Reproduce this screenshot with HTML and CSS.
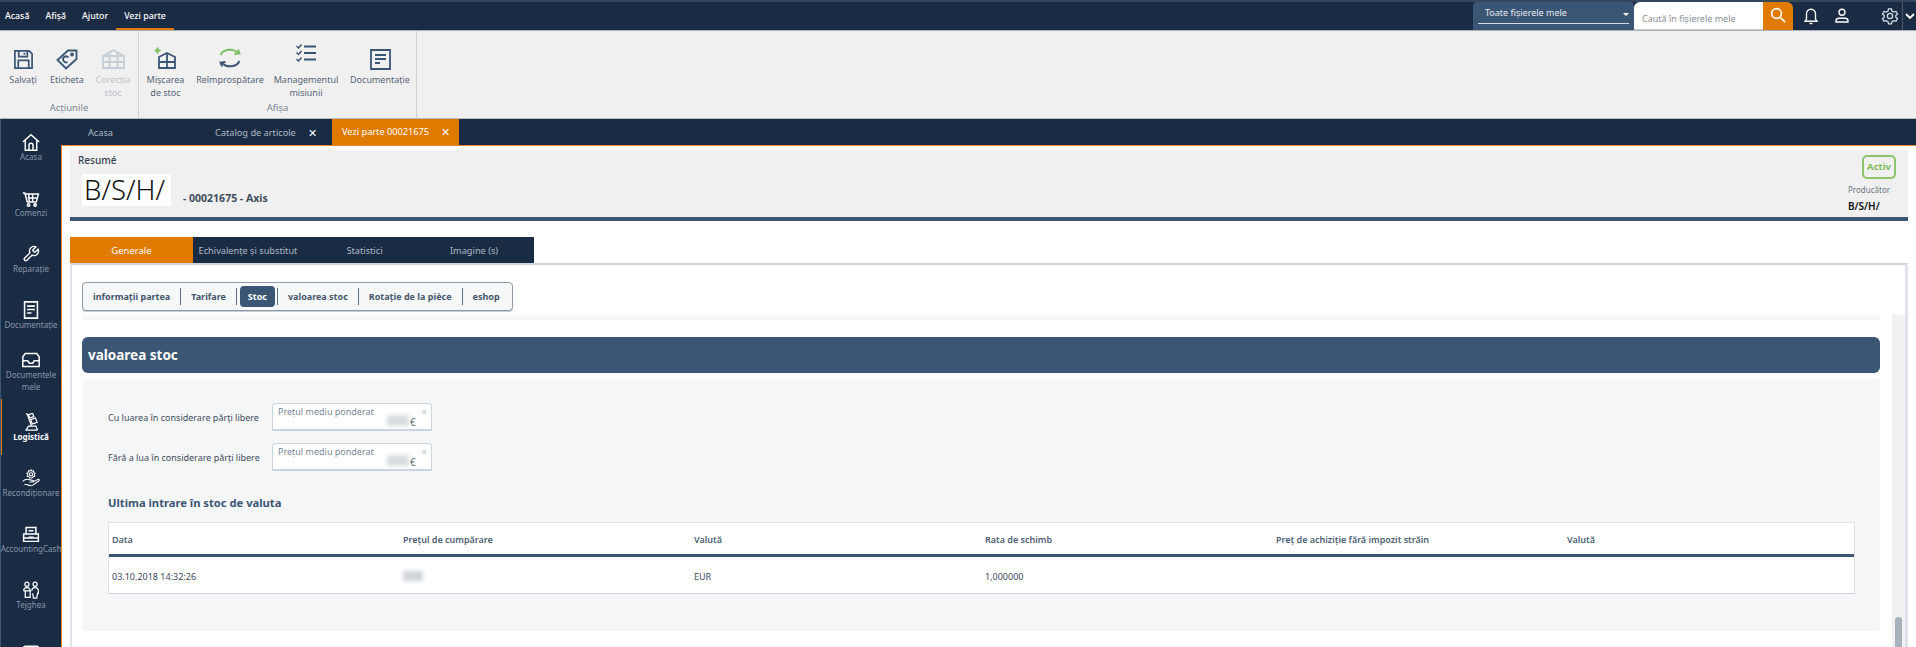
FILE: index.html
```html
<!DOCTYPE html>
<html lang="ro">
<head>
<meta charset="utf-8">
<title>Vezi parte 00021675</title>
<link rel="stylesheet" href="styles.css">
</head>
<body>
<header class="topbar">
  <nav class="menu">
    <span class="menu-item">Acasă</span>
    <span class="menu-item">Afișă</span>
    <span class="menu-item">Ajutor</span>
    <span class="menu-item is-active">Vezi parte</span>
  </nav>
  <div class="top-tools">
    <div class="scope"><span class="scope-text">Toate fișierele mele</span><span class="scope-caret"></span></div>
    <div class="search"><span>Caută în fișierele mele</span></div>
    <div class="search-btn">
      <svg width="18" height="18" viewBox="0 0 24 24" fill="none" stroke="#fff" stroke-width="2.2"><circle cx="10" cy="10" r="6.5"/><path d="M15 15l6.5 6.5"/></svg>
    </div>
    <div class="tool bell">
      <svg width="18" height="20" viewBox="0 0 24 24" fill="none" stroke="#fff" stroke-width="1.8"><path d="M12 3a6 6 0 0 1 6 6v7l2 3H4l2-3V9a6 6 0 0 1 6-6z"/><path d="M10 22h4"/></svg>
    </div>
    <div class="tool user">
      <svg width="18" height="18" viewBox="0 0 24 24" fill="none" stroke="#fff" stroke-width="1.8"><circle cx="12" cy="7" r="4"/><path d="M4 20v-1.500c0-2 2-3.500 4-3.500h8c2 0 4 1.500 4 3.500V20z"/></svg>
    </div>
    <div class="tool gear">
      <svg width="18" height="18" viewBox="0 0 24 24" fill="none" stroke="#d5dbe3" stroke-width="1.700"><circle cx="12" cy="12" r="3.500"/><path d="M10 2.500h4l.6 3 2.500 1.400 2.900-1 2 3.500-2.300 2v2.200l2.300 2-2 3.500-2.900-1-2.500 1.400-.6 3h-4l-.6-3-2.500-1.400-2.900 1-2-3.500 2.300-2v-2.200l-2.300-2 2-3.500 2.900 1 2.500-1.400z"/></svg>
    </div>
    <div class="chevron">
      <svg width="10" height="8" viewBox="0 0 10 8" fill="none" stroke="#fff" stroke-width="1.800"><path d="M1 2l4 4 4-4"/></svg>
    </div>
  </div>
</header>

<section class="ribbon">
  <div class="group group-actions">
    <div class="group-items items-actions">
      <div class="rb">
        <span class="rb-icon"><svg width="21" height="21" viewBox="0 0 22 22" fill="none" stroke="#3b5675" stroke-width="1.800"><path d="M2 2h15l3 3v15H2z"/><path d="M6 2v6h9V2M12 4v2M5.500 20v-8h11v8"/></svg></span>
        <span class="rb-label">Salvați</span>
      </div>
      <div class="rb">
        <span class="rb-icon"><svg width="22" height="22" viewBox="0 0 22 22" fill="none" stroke="#3b5675" stroke-width="1.800"><path d="M1.500 12L12 2.500h8.500V11L10 20.500z"/><circle cx="16" cy="6.500" r="1"/><path d="M12.500 9.500a3 3 0 1 0-1 4.500"/></svg></span>
        <span class="rb-label">Eticheta</span>
      </div>
      <div class="rb is-disabled">
        <span class="rb-icon"><svg width="25" height="22" viewBox="0 0 25 22" fill="none" stroke="#c5ced6" stroke-width="1.800"><path d="M2 8l10.500-6L23 8v12H2z"/><path d="M2 8h21M2 14h21M8.500 4v16M16.500 4v16"/></svg></span>
        <span class="rb-label">Corecția<br>stoc</span>
      </div>
    </div>
    <div class="group-name">Acțiunile</div>
  </div>
  <div class="group group-view">
    <div class="group-items items-view">
      <div class="rb">
        <span class="rb-icon"><svg width="24" height="24" viewBox="0 0 24 24" fill="none" stroke="#3b5675" stroke-width="1.800"><path d="M5 11l8-4 8 4v11H5z"/><path d="M5 16h16M13 7v15"/><path d="M3.500 1.500v6M.5 4.500h6" stroke="#7dbf62" stroke-width="2"/></svg></span>
        <span class="rb-label">Mișcarea<br>de stoc</span>
      </div>
      <div class="rb">
        <span class="rb-icon"><svg width="24" height="24" viewBox="0 0 24 24" fill="none" stroke-width="1.900"><path d="M2.500 9A10 8 0 0 1 20 7" stroke="#7dbf62"/><path d="M16.500 8l5-.5L20 3.500" stroke="#7dbf62"/><path d="M21.500 15A10 8 0 0 1 4 17" stroke="#3b5675"/><path d="M7.500 16l-5 .5L4 20.500" stroke="#3b5675"/></svg></span>
        <span class="rb-label">Reîmprospătare</span>
      </div>
      <div class="rb rb-up">
        <span class="rb-icon"><svg width="20" height="18" viewBox="0 0 20 18" fill="none" stroke="#3b5675" stroke-width="1.800"><path d="M8 2.500h12M8 9h12M8 15.500h12"/><path d="M.5 2l2 2 3-3.500M.5 8.500l2 2 3-3.500M.5 15l2 2 3-3.500" stroke-width="1.500"/></svg></span>
        <span class="rb-label">Managementul<br>misiunii</span>
      </div>
      <div class="rb">
        <span class="rb-icon"><svg width="21" height="21" viewBox="0 0 21 21" fill="none" stroke="#3b5675" stroke-width="1.800"><path d="M1 1h19v19H1z"/><path d="M5 6h11M5 10h11M5 14h5"/></svg></span>
        <span class="rb-label">Documentație</span>
      </div>
    </div>
    <div class="group-name">Afișa</div>
  </div>
</section>

<div class="workspace">
  <aside class="sidebar">
    <div class="nav-item">
      <svg width="20" height="18" viewBox="0 0 24 22" fill="none" stroke="#fff" stroke-width="1.800"><path d="M2 11L12 2l10 9M5 9v12h14V9M9.500 21v-6a2.500 2.500 0 0 1 5 0v6"/></svg>
      <span>Acasa</span>
    </div>
    <div class="nav-item">
      <svg width="18" height="18" viewBox="0 0 22 22" fill="none" stroke="#fff" stroke-width="1.800"><path d="M1 5h2.500l3 11h11L20 6H4M8 6l1 10M13 6v10M7 11h12"/><circle cx="8" cy="19.500" r="1.500"/><circle cx="16" cy="19.500" r="1.500"/></svg>
      <span>Comenzi</span>
    </div>
    <div class="nav-item">
      <svg width="18" height="18" viewBox="0 0 24 24" fill="none" stroke="#fff" stroke-width="1.800"><path d="M14.700 6.300a1 1 0 0 0 0 1.400l1.600 1.600a1 1 0 0 0 1.400 0l3.770-3.770a6 6 0 0 1-7.940 7.940l-6.910 6.910a2.120 2.120 0 0 1-3-3l6.910-6.910a6 6 0 0 1 7.940-7.940l-3.760 3.760z"/></svg>
      <span>Reparație</span>
    </div>
    <div class="nav-item">
      <svg width="18" height="18" viewBox="0 0 21 21" fill="none" stroke="#fff" stroke-width="1.800"><path d="M3 1h15v19H3z"/><path d="M6 6h9M6 10h9M6 14h5"/></svg>
      <span>Documentație</span>
    </div>
    <div class="nav-item">
      <svg width="18" height="18" viewBox="0 0 22 22" fill="none" stroke="#fff" stroke-width="1.800"><path d="M4 3h14l3 4v12H1V7zM1 12h6l2 3h4l2-3h6"/></svg>
      <span>Documentele<br>mele</span>
    </div>
    <div class="nav-item is-active">
      <svg width="18" height="18" viewBox="0 0 22 22" fill="none" stroke="#fff" stroke-width="1.500"><path d="M5 .5l1.500 1 5 14M4 21h15M5 21l3-5h9l2 5"/><path d="M8 2l5-1.500 1.500 4-5 1.500zM10.500 8l6-2 2 5.500-6 2z"/></svg>
      <span>Logistică</span>
    </div>
    <div class="nav-item">
      <svg width="18" height="18" viewBox="0 0 22 22" fill="none" stroke="#fff" stroke-width="1.300"><circle cx="11" cy="6.500" r="2"/><path d="M11 1l1 1.500 2-.3.500 2 1.500 1.300-1 1.500.5 2-2 .5-1 1.500H9.500L8.500 9.500l-2-.5.500-2L6 5.500l1.500-1.300.5-2 2 .3z"/><path d="M1 15c2-2 5-3 8-2l4 1c2 0 2 2 0 2H9m4 0l6-3c2-1 3 1 1 2l-7 5c-2 1-5 0-7-1H3"/></svg>
      <span>Recondiționare</span>
    </div>
    <div class="nav-item">
      <svg width="18" height="18" viewBox="0 0 22 22" fill="none" stroke="#fff" stroke-width="1.800"><path d="M5 11V3h12v8M2 11h18v9H2zM2 16h18M8 7h6M8 15h6"/></svg>
      <span>AccountingCash</span>
    </div>
    <div class="nav-item">
      <svg width="18" height="18" viewBox="0 0 22 22" fill="none" stroke="#fff" stroke-width="1.500"><circle cx="6" cy="4" r="2.500"/><circle cx="16" cy="4" r="2.500"/><path d="M2 12c0-3 2-4 4-4s4 1 4 4M12 12c0-3 2-4 4-4s4 1 4 4v3h-1l-1 6h-4l-1-6M2 12h9M4 12v8h6v-8"/></svg>
      <span>Tejghea</span>
    </div>
    <div class="nav-item">
      <svg width="18" height="18" viewBox="0 0 22 22" fill="none" stroke="#fff" stroke-width="1.800"><rect x="2" y="4" width="18" height="15" rx="2"/><path d="M2 9h18"/></svg>
      <span></span>
    </div>
  </aside>

  <main class="main">
    <div class="doc-tabs">
      <div class="doc-tab tab-home">Acasa</div>
      <div class="doc-tab tab-catalog">Catalog de articole<span class="doc-x">✕</span></div>
      <div class="doc-tab tab-part">Vezi parte 00021675<span class="doc-x">✕</span></div>
    </div>
    <div class="content">
      <section class="summary">
        <div class="summary-left">
          <div class="summary-title">Resumé</div>
          <div class="summary-id">
            <span class="logo">B/S/H/</span>
            <span class="part-code">- 00021675 - Axis</span>
          </div>
        </div>
        <div class="summary-right">
          <span class="badge">Activ</span>
          <span class="maker-label">Producător</span>
          <span class="maker-name">B/S/H/</span>
        </div>
      </section>

      <div class="tabs">
        <div class="tab is-active">Generale</div>
        <div class="tab">Echivalențe și substitut</div>
        <div class="tab">Statistici</div>
        <div class="tab">Imagine (s)</div>
      </div>

      <section class="panel">
        <div class="subtabs">
          <span class="subtab">informații partea</span><i></i>
          <span class="subtab">Tarifare</span><i></i>
          <span class="subtab is-active">Stoc</span><i></i>
          <span class="subtab">valoarea stoc</span><i></i>
          <span class="subtab">Rotație de la pièce</span><i></i>
          <span class="subtab">eshop</span>
        </div>
        <div class="scroller">
          <div class="scroll-body">
            <div class="strip"></div>
            <h2 class="section-head">valoarea stoc</h2>
            <div class="section-body">
              <div class="form-row">
                <label>Cu luarea în considerare părți libere</label>
                <div class="field"><span class="field-label">Prețul mediu ponderat</span><span class="smudge"></span><span class="field-unit">€</span><span class="field-x">×</span></div>
              </div>
              <div class="form-row">
                <label>Fără a lua în considerare părți libere</label>
                <div class="field"><span class="field-label">Prețul mediu ponderat</span><span class="smudge"></span><span class="field-unit">€</span><span class="field-x">×</span></div>
              </div>
              <h3 class="sub-title">Ultima intrare în stoc de valuta</h3>
              <div class="table">
                <div class="t-row t-head">
                  <span>Data</span><span>Prețul de cumpărare</span><span>Valută</span><span>Rata de schimb</span><span>Preț de achiziție fără impozit străin</span><span>Valută</span>
                </div>
                <div class="t-row t-data">
                  <span>03.10.2018 14:32:26</span><span><b class="smudge-cell"></b></span><span>EUR</span><span>1,000000</span><span></span><span></span>
                </div>
              </div>
            </div>
          </div>
          <div class="scrollbar"><div class="thumb"></div></div>
        </div>
      </section>
    </div>
  </main>
</div>
</body>
</html>
```
FILE: styles.css
```css
* { box-sizing: border-box; }
html, body { margin: 0; height: 647px; overflow: hidden; }
body { font-family: "Noto Sans", "Open Sans", sans-serif; font-size: 9px; color: #3c4b5e; background: #fff; }

/* top bar */
.topbar { height: 30px; display: flex; justify-content: space-between; background: #1a2c44; border-top: 2px solid #34475c; }
.menu { display: flex; }
.menu-item { height: 28px; padding: 0 8px; line-height: 29px; color: #fff; font-size: 8.8px; font-weight: 500; }
.menu-item:first-child { padding-left: 5px; }
.menu-item.is-active { border-bottom: 2px solid #e07a00; }
.top-tools { display: flex; }
.scope { width: 161px; position: relative; background: #3b5675; border-radius: 4px 4px 0 0; padding: 0 5px; }
.scope-text { display: block; height: 22px; line-height: 22px; padding-left: 7px; border-bottom: 1px solid #d5dde6; color: #e3e8ee; font-size: 9px; }
.scope-caret { position: absolute; right: 5px; top: 11px; border: 3px solid transparent; border-top: 3px solid #fff; }
.search { width: 129px; background: #fff; border-radius: 6px 0 0 0; padding-left: 8px; line-height: 34px; color: #8a8f98; font-size: 9px; border-bottom: 1px solid #c9ced4; }
.search-btn { width: 30px; background: #e07a00; border-radius: 0 6px 0 0; display: flex; align-items: center; justify-content: center; padding-bottom: 3px; }
.tool { display: flex; align-items: center; justify-content: center; height: 28px; }
.bell { width: 36px; }
.user { width: 26px; }
.gear { width: 47px; justify-content: flex-end; padding-right: 3px; }
.chevron { width: 14px; height: 28px; border-left: 1px solid #4b5a6b; display: flex; align-items: center; justify-content: center; }

/* ribbon */
.ribbon { height: 89px; display: flex; background: #f0f0f0; border-top: 1px solid #a9aeb4; border-bottom: 1px solid #b8b8b8; }
.group { display: flex; flex-direction: column; border-right: 1px solid #d2d2d2; }
.group-actions { width: 139px; }
.group-view { width: 278px; }
.group-items { display: grid; height: 70px; }
.items-actions { grid-template-columns: 46px 42px 50px; }
.items-view { grid-template-columns: 53px 76px 76px 72px; }
.rb { display: flex; flex-direction: column; align-items: center; padding-top: 12px; color: #566476; text-align: center; line-height: 13px; font-size: 9px; }
.rb-icon { height: 27px; display: flex; align-items: flex-end; justify-content: center; margin-bottom: 3px; }
.rb-up .rb-icon { align-items: flex-start; padding-top: 1px; }
.rb-label { white-space: nowrap; }
.is-disabled { color: #bcc3cb; }
.group-name { text-align: center; color: #7c8794; font-size: 9.5px; line-height: 14px; }

/* workspace */
.workspace { height: 528px; display: flex; overflow: hidden; }
.sidebar { width: 61px; flex: none; background: #1a2c44; border-left: 1px solid #3b5675; }
.nav-item { height: 56px; padding-top: 2px; display: flex; flex-direction: column; align-items: center; justify-content: center; color: #8796a8; font-size: 8px; line-height: 12px; text-align: center; white-space: nowrap; }
.nav-item svg { flex: none; }
.nav-item.is-active { color: #fff; font-weight: 700; box-shadow: inset 1px 0 0 #e07a00; }

.main { flex: 1; min-width: 0; display: flex; flex-direction: column; }
.doc-tabs { height: 26px; flex: none; display: flex; background: #1a2c44; color: #aeb9c6; font-size: 9.2px; line-height: 27px; }
.doc-tab { display: flex; white-space: nowrap; }
.tab-home { width: 139px; padding-left: 27px; }
.tab-catalog { width: 132px; padding-left: 15px; }
.tab-part { width: 127px; padding-left: 10px; background: #e07a00; color: #fff; line-height: 25px; }
.doc-x { margin-left: 12px; font-size: 11px; color: #fff; }

.content { flex: 1; min-height: 0; border-top: 1px solid #e9872a; border-left: 1px solid #e9872a; padding: 4px 8px 0; display: flex; flex-direction: column; }

.summary { height: 71px; flex: none; display: flex; justify-content: space-between; background: #f0f0f0; border-bottom: 4px solid #3b5675; padding: 3px 12px 0 8px; }
.summary-title { font-size: 10px; font-weight: 500; color: #333f4e; line-height: 14px; }
.summary-id { display: flex; align-items: flex-end; margin: 7px 0 0 4px; }
.logo { width: 89px; height: 32px; background: #fff; color: #111; font-size: 27.5px; line-height: 32px; padding-left: 2px; font-weight: 300; }
.part-code { margin-left: 12px; font-size: 10.5px; font-weight: 700; color: #404d5e; line-height: 15px; }
.summary-right { width: 48px; display: flex; flex-direction: column; align-items: flex-start; }
.badge { align-self: flex-end; width: 34px; height: 24px; margin-top: 2px; border: 2px solid #8cc56a; border-radius: 5px; color: #7cbb59; font-size: 9.5px; font-weight: 700; line-height: 19px; text-align: center; }
.maker-label { margin-top: 5px; color: #6c7888; font-size: 8px; line-height: 12px; }
.maker-name { margin-top: 3px; color: #111; font-size: 10px; font-weight: 600; line-height: 14px; }

.tabs { margin-top: 16px; height: 26px; flex: none; width: 464px; display: grid; grid-template-columns: 123px 110px 123px 108px; background: #1a2c44; color: #aeb9c6; text-align: center; line-height: 27px; font-size: 9.2px; }
.tab.is-active { background: #e07a00; color: #fff; font-size: 9.5px; }
.tab:last-child { text-align: left; padding-left: 24px; }

.panel { flex: 1; min-height: 0; display: flex; flex-direction: column; border-top: 2px solid #cfd6e2; border-left: 2px solid #dfe3e9; border-right: 3px solid #dfe3e9; }
.subtabs { align-self: flex-start; margin: 17px 0 0 10px; width: 431px; height: 29px; display: flex; align-items: center; border: 1px solid #8f9aa9; border-radius: 4px; background: #f6f7f9; box-shadow: 0 1px 0 #c5ccd6; }
.subtabs i { flex: none; width: 1px; height: 17px; background: #5d6e84; }
.subtab { flex: none; padding: 0 10px; font-weight: 700; color: #45566d; font-size: 9px; line-height: 19px; white-space: nowrap; }
.subtab.is-active { margin: 0 2px 0 3px; padding: 0; width: 35px; text-align: center; height: 21px; line-height: 21px; background: #3b5675; color: #fff; border-radius: 4px; }

.scroller { flex: 1; min-height: 0; margin-top: 4px; display: flex; overflow: hidden; }
.scroll-body { flex: 1; min-width: 0; padding: 0 12px 0 11px; }
.strip { height: 5px; background: #f5f6f8; }
.section-head { margin: 17px 0 0 -1px; height: 36px; padding-left: 6px; background: #3b5675; border-radius: 6px; color: #fff; font-size: 13.5px; font-weight: 700; line-height: 36px; }
.section-body { margin-top: 6px; height: 252px; padding: 24px 25px 0; background: #f5f6f8; border-radius: 4px; }
.form-row { display: flex; align-items: center; height: 28px; margin-bottom: 12px; }
.form-row label { width: 164px; flex: none; color: #3f4d60; font-size: 9px; white-space: nowrap; }
.field { position: relative; width: 160px; height: 28px; background: #fff; border: 1px solid #cbd4e0; border-bottom-width: 2px; border-radius: 4px 4px 0 0; }
.field-label { position: absolute; left: 5px; top: 1px; color: #7b8698; font-size: 9px; line-height: 13px; white-space: nowrap; }
.smudge { position: absolute; left: 114px; top: 11px; width: 22px; height: 11px; background: #d8dce0; filter: blur(2px); }
.field-unit { position: absolute; left: 137px; top: 12px; color: #5d6a7a; font-size: 10px; line-height: 13px; }
.field-x { position: absolute; left: 148px; top: 1px; color: #c3c8ce; font-size: 11px; line-height: 14px; }
.sub-title { margin: 25px 0 12px; font-size: 11.2px; line-height: 14px; font-weight: 700; color: #3b5675; }

.table { height: 72px; background: #fff; border: 1px solid #e0e2e5; border-bottom-color: #cfd2d6; }
.t-row { display: grid; grid-template-columns: repeat(5, 291px) 1fr; padding-left: 3px; align-items: center; }
.t-head { height: 34px; padding-top: 1px; border-bottom: 3px solid #3b5675; color: #4d5e74; font-weight: 600; font-size: 9px; }
.t-data { height: 36px; padding-top: 2px; color: #3c4a5c; font-size: 9px; }
.smudge-cell { display: block; width: 20px; height: 10px; background: #cfd3d8; filter: blur(2px); }

.scrollbar { width: 13px; flex: none; background: #f1f1f1; padding: 302px 0 0 3px; }
.thumb { width: 7px; height: 40px; background: #a8b2bd; border-radius: 3px; }
```
